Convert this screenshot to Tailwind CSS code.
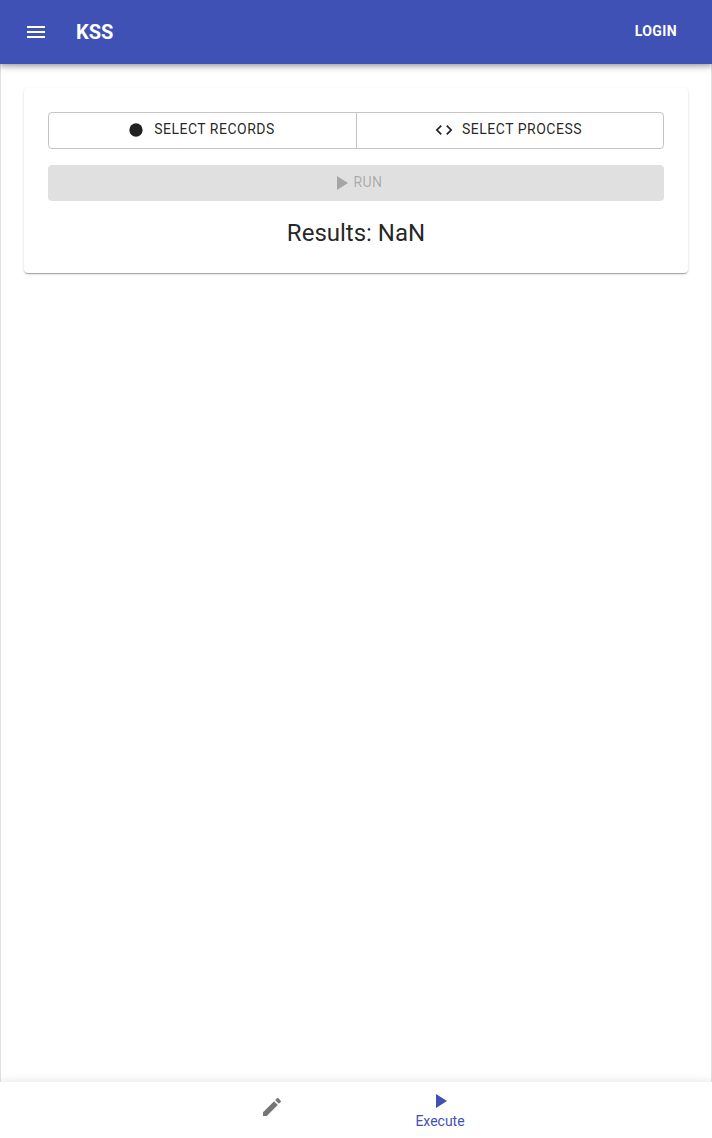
<!DOCTYPE html>
<html lang="en">
<head>
<meta charset="utf-8">
<title>KSS</title>
<script src="https://cdn.jsdelivr.net/npm/@tailwindcss/browser@4"></script>
</head>
<body class="bg-white text-black/87 font-[Roboto,sans-serif]">
<div class="flex h-[1138px] w-[712px] flex-col overflow-hidden">
  <header class="relative z-10 flex h-16 shrink-0 items-center bg-[#3f51b5] px-6 text-white shadow-[0_2px_4px_-1px_rgba(0,0,0,0.2),0_4px_5px_0_rgba(0,0,0,0.14),0_1px_10px_0_rgba(0,0,0,0.12)]">
    <svg class="size-6" viewBox="0 0 24 24" fill="currentColor"><path d="M3 18h18v-2H3v2zm0-5h18v-2H3v2zm0-7v2h18V6H3z"/></svg>
    <h1 class="ml-7 grow text-[20px] leading-8 font-bold">KSS</h1>
    <button class="mr-[11px] pb-0.5 text-[14px] leading-6 font-bold tracking-[0.4px]">LOGIN</button>
  </header>
  <main class="grow border-x border-[#e0e0e0] px-[23px] pt-6">
    <section class="flex h-[185px] flex-col rounded bg-white px-6 pt-6 shadow-[0_2px_1px_-1px_rgba(0,0,0,0.2),0_1px_1px_0_rgba(0,0,0,0.14),0_1px_3px_0_rgba(0,0,0,0.12)]">
      <div class="flex h-[37px] rounded border border-black/23 text-[14px] font-normal tracking-[0.5px]">
        <button class="flex w-[308px] items-center justify-center border-r border-black/23 pr-1 pb-0.5"><svg class="mt-px mr-2 size-5" viewBox="0 0 24 24" fill="currentColor"><circle cx="12" cy="12" r="8"/></svg>SELECT RECORDS</button>
        <button class="flex grow items-center justify-center pr-1 pb-0.5"><svg class="mt-px mr-2 size-5" viewBox="0 0 24 24" fill="currentColor"><path d="M9.4 16.6L4.8 12l4.6-4.6L8 6l-6 6 6 6 1.4-1.4zm5.2 0l4.6-4.6-4.6-4.6L16 6l6 6-6 6-1.4-1.4z"/></svg>SELECT PROCESS</button>
      </div>
      <button class="mt-4 flex h-9 items-center justify-center rounded bg-black/12 text-[14px] font-normal tracking-[0.5px] text-black/26"><svg class="size-6" viewBox="0 0 24 24" fill="currentColor"><path d="M8 5v14l11-7z"/></svg><span class="pb-0.5">RUN</span></button>
      <h2 class="mt-4 text-center text-[24px] leading-8">Results: NaN</h2>
    </section>
  </main>
  <nav class="relative flex h-14 shrink-0 justify-center bg-white shadow-[0_0_10px_rgba(0,0,0,0.12)]">
    <button class="flex w-[168px] items-center justify-center text-black/54"><svg class="mt-[-6px] size-6" viewBox="0 0 24 24" fill="currentColor"><path d="M3 17.25V21h3.75L17.81 9.94l-3.75-3.75L3 17.25zM20.71 7.04c.39-.39.39-1.02 0-1.41l-2.34-2.34c-.39-.39-1.02-.39-1.41 0l-1.83 1.83 3.75 3.75 1.83-1.83z"/></svg></button>
    <button class="flex w-[168px] flex-col items-center pt-[7px] text-[14px] leading-4 text-[#3f51b5]"><svg class="size-6" viewBox="0 0 24 24" fill="currentColor"><path d="M8 5v14l11-7z"/></svg>Execute</button>
  </nav>
</div>
</body>
</html>
